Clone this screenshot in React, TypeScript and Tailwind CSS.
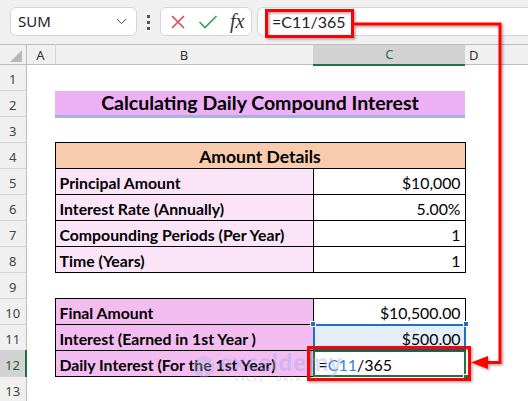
import { ChevronDown } from "lucide-react";

const cellFont = "font-['Lato','Liberation_Sans',sans-serif]";
const uiFont = "font-['Noto_Sans','Open_Sans',sans-serif]";

function RowHead({ n, active = false }: { n: number; active?: boolean }) {
  return (
    <th
      className={
        active
          ? `h-[26px] border-b border-b-[#d4d4d4] border-r-2 border-r-[#217346] bg-[#d2d2d2] p-0 pt-[3px] text-[13px] font-normal leading-[18px] text-[#1d5e36] ${uiFont}`
          : `h-[26px] border-b border-b-[#d4d4d4] border-r border-r-[#bdbdbd] bg-[#f0f0f0] p-0 pt-[3px] text-[13px] font-normal leading-[18px] text-[#444] ${uiFont}`
      }
    >
      {n}
    </th>
  );
}

function Blank({ n }: { n: number }) {
  return (
    <tr className="h-[26px]">
      <RowHead n={n} />
      <td />
      <td />
      <td />
      <td />
    </tr>
  );
}

function LabelRow({
  n,
  label,
  value,
  strong = false,
}: {
  n: number;
  label: string;
  value: string;
  strong?: boolean;
}) {
  return (
    <tr className="h-[26px]">
      <RowHead n={n} />
      <td />
      <td
        className={`border border-black px-[4px] pt-[2px] text-[15.8px] font-bold leading-[20px] text-black ${
          strong ? "bg-[#f4bdf1]" : "bg-[#fbe4f8]"
        }`}
      >
        {label}
      </td>
      <td className="border border-black px-[4px] pt-[2px] text-right text-[15.8px] leading-[20px] text-black">
        {value}
      </td>
      <td />
    </tr>
  );
}

function Handle({ className }: { className: string }) {
  return (
    <span
      className={`absolute h-[6px] w-[6px] border border-white bg-[#1f6fc5] ${className}`}
    />
  );
}

export default function App() {
  return (
    <div className="relative h-[401px] w-[528px] overflow-hidden bg-white">
      {/* formula bar */}
      <div className="flex h-[44px] items-start bg-[#f0f0f0] pt-[7px]">
        <div
          className={`ml-[10px] flex h-[29px] w-[127px] items-center justify-between rounded-md border border-[#d6d6d6] bg-white pl-[7px] pr-[6px] text-[15px] text-[#222] ${uiFont}`}
        >
          SUM
          <ChevronDown size={17} strokeWidth={1.4} className="text-[#444]" />
        </div>
        <div className="mx-[10px] mt-[8px] flex flex-col gap-[3px]">
          <span className="h-[3px] w-[3px] bg-[#555]" />
          <span className="h-[3px] w-[3px] bg-[#555]" />
          <span className="h-[3px] w-[3px] bg-[#555]" />
        </div>
        <div className="flex h-[29px] w-[92px] items-center gap-[12px] rounded-md border border-[#d6d6d6] bg-white pl-[9px]">
          <svg width="16" height="16" viewBox="0 0 16 16">
            <path d="M2 2 L14 14 M14 2 L2 14" stroke="#e0474c" strokeWidth="1.6" fill="none" />
          </svg>
          <svg width="20" height="16" viewBox="0 0 20 16">
            <path d="M1.5 8 L7 13.5 L18.5 2" stroke="#3c9c55" strokeWidth="1.6" fill="none" />
          </svg>
          <span className="-mt-[2px] font-['Liberation_Serif',serif] text-[20px] italic leading-[24px] text-[#333]">
            fx
          </span>
        </div>
        <div
          className={`ml-[5px] flex h-[29px] flex-1 items-center rounded-l-md border border-r-0 border-[#d6d6d6] bg-white pl-[14px] text-[16px] text-[#222] ${cellFont}`}
        >
          =C11/365
        </div>
      </div>

      {/* sheet */}
      <table className={`w-[528px] table-fixed border-collapse ${cellFont}`}>
        <colgroup>
          <col className="w-[26px]" />
          <col className="w-[29px]" />
          <col className="w-[258px]" />
          <col className="w-[152px]" />
          <col className="w-[63px]" />
        </colgroup>
        <thead>
          <tr className={`h-[20px] text-[13px] font-normal leading-[18px] text-[#333] ${uiFont}`}>
            <th className="relative border-b border-r border-t border-[#bdbdbd] bg-[#f0f0f0] p-0">
              <span className="absolute bottom-[2px] right-[4px] h-0 w-0 border-b-[12px] border-l-[12px] border-b-[#b8b8b8] border-l-transparent" />
            </th>
            <th className="border-b border-r border-t border-[#bdbdbd] border-r-[#d4d4d4] bg-[#f0f0f0] p-0 font-normal">
              A
            </th>
            <th className="border-b border-r border-t border-[#bdbdbd] border-r-[#d4d4d4] bg-[#f0f0f0] p-0 font-normal">
              B
            </th>
            <th className="border-b-2 border-t border-[#bdbdbd] border-b-[#217346] bg-[#d2d2d2] p-0 font-normal text-[#217346]">
              C
            </th>
            <th className="border-b border-t border-[#bdbdbd] bg-[#f0f0f0] p-0 pl-[4px] text-left font-normal">
              D
            </th>
          </tr>
        </thead>
        <tbody>
          <Blank n={1} />
          <tr className="h-[26px]">
            <RowHead n={2} />
            <td />
            <td
              colSpan={2}
              className="border-b-[3px] border-b-[#a3b3dc] bg-[#eeb0f5] pt-[1px] text-center text-[19.5px] font-bold leading-[20px] text-black"
            >
              Calculating Daily Compound Interest
            </td>
            <td />
          </tr>
          <Blank n={3} />
          <tr className="h-[26px]">
            <RowHead n={4} />
            <td />
            <td
              colSpan={2}
              className="border border-black bg-[#f8cbad] pt-[2px] text-center text-[17.5px] font-bold leading-[20px] text-black"
            >
              Amount Details
            </td>
            <td />
          </tr>
          <LabelRow n={5} label="Principal Amount" value="$10,000" />
          <LabelRow n={6} label="Interest Rate (Annually)" value="5.00%" />
          <LabelRow n={7} label="Compounding Periods (Per Year)" value="1" />
          <LabelRow n={8} label="Time (Years)" value="1" />
          <Blank n={9} />
          <LabelRow n={10} label="Final Amount" value="$10,500.00" strong />
          <tr className="h-[26px]">
            <RowHead n={11} />
            <td />
            <td className="border border-black bg-[#f4bdf1] px-[4px] pt-[2px] text-[15.8px] font-bold leading-[20px] text-black">
              Interest (Earned in 1st Year )
            </td>
            <td className="relative border border-black bg-[#e3eef9] px-[4px] pt-[2px] text-right text-[15.8px] leading-[20px] text-black">
              <span className="pointer-events-none absolute -inset-[1px] border-2 border-[#1f6fc5]" />
              <Handle className="-left-[4px] -top-[4px]" />
              <Handle className="-right-[4px] -top-[4px]" />
              <span className="relative">$500.00</span>
            </td>
            <td />
          </tr>
          <tr className="h-[26px]">
            <RowHead n={12} active />
            <td />
            <td className="border border-black bg-[#f4bdf1] px-[4px] pt-[2px] text-[15.8px] font-bold leading-[20px] text-black">
              Daily Interest (For the 1st Year)
            </td>
            <td className="relative border border-black px-[5px] pt-[2px] text-[16px] leading-[20px] text-black">
              <span className="pointer-events-none absolute -inset-[1px] border-2 border-[#217346]" />
              <span className="absolute -bottom-[4px] -right-[4px] h-[6px] w-[6px] border border-white bg-[#217346]" />
              <span className="relative">
                =<span className="text-[#3b7fd6]">C11</span>/365
              </span>
            </td>
            <td />
          </tr>
          <Blank n={13} />
        </tbody>
      </table>

      {/* watermark */}
      <div className="pointer-events-none absolute left-[193px] top-[351px] flex items-center gap-[4px] opacity-35">
        <svg width="22" height="26" viewBox="0 0 22 26">
          <path d="M11 1 L21 7 L21 19 L11 25 L1 19 L1 7 Z" fill="#a9b2e0" />
          <path d="M11 13 L21 7 M11 13 L1 7 M11 13 L11 25" stroke="#ffffff" strokeWidth="1.2" />
        </svg>
        <div className="flex flex-col leading-none">
          <span className="font-['Open_Sans',sans-serif] text-[23px] font-bold text-[#9aa4ec]">
            exceldemy
          </span>
          <span className="mt-[1px] pl-[16px] font-['Open_Sans',sans-serif] text-[7px] tracking-[2px] text-[#888]">
            EXCEL · DATA · BI
          </span>
        </div>
      </div>

      {/* annotation: red boxes and arrow */}
      <svg
        className="pointer-events-none absolute left-0 top-0"
        width="528"
        height="401"
        viewBox="0 0 528 401"
      >
        <defs>
          <filter id="sh" x="-5%" y="-5%" width="110%" height="110%">
            <feDropShadow dx="1.5" dy="1.5" stdDeviation="1" floodColor="#000" floodOpacity="0.35" />
          </filter>
        </defs>
        <g filter="url(#sh)" fill="none" stroke="#ff0000" strokeWidth="3">
          <rect x="266.5" y="10.5" width="86" height="26" />
          <rect x="308.5" y="347.5" width="161" height="32" />
          <path d="M352 24 L500 24 L500 362.5 L484 362.5" />
          <path d="M471 362.5 L488 356 L488 369 Z" fill="#ff0000" stroke="none" />
        </g>
      </svg>
    </div>
  );
}
